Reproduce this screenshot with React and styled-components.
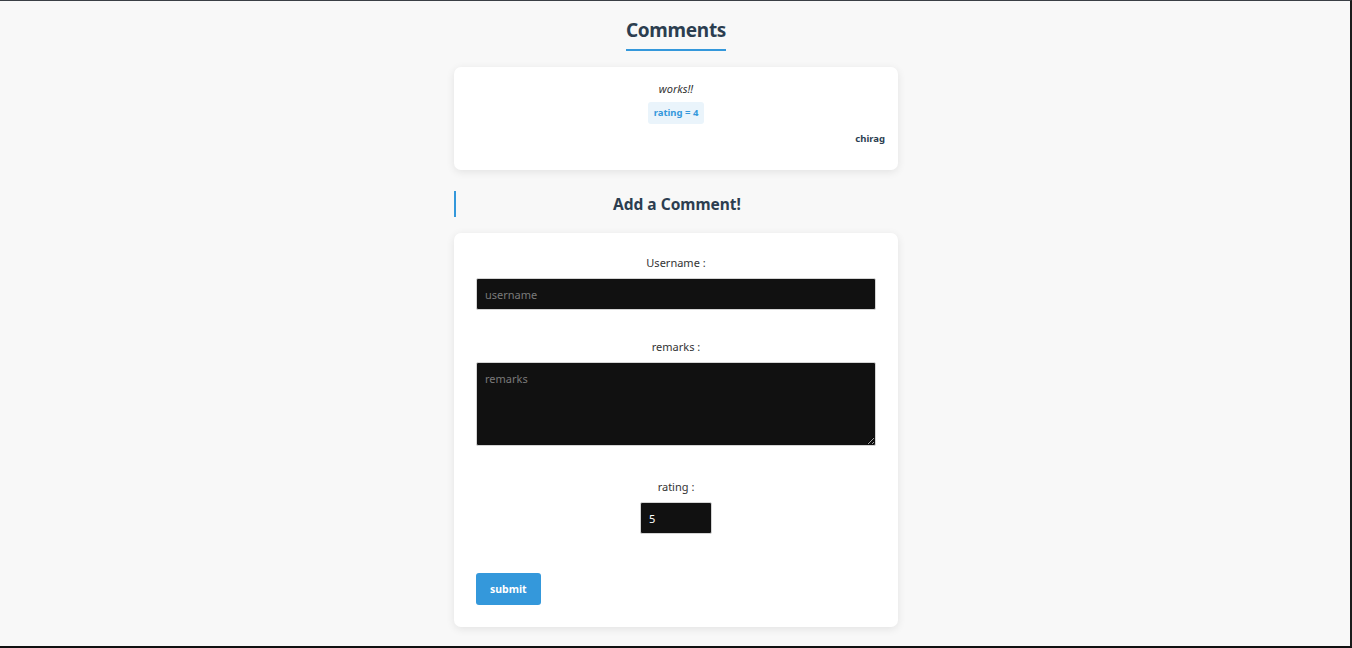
import React from "react";
import styled, { createGlobalStyle } from "styled-components";

const GlobalStyle = createGlobalStyle`
  html, body, #root { height: 100%; }
  body {
    margin: 0;
    background: #f8f8f8;
    font-family: "Noto Sans", "Open Sans", sans-serif;
    color: #333;
  }
  * { box-sizing: border-box; }
`;

const Frame = styled.div`
  min-height: 100vh;
  padding-left: 2px;
  border-top: 1px solid #3a3f45;
  border-right: 2px solid #1b1b1b;
  border-bottom: 2px solid #111;
  background: #f8f8f8;
  overflow: hidden;
`;

const Container = styled.main`
  width: 444px;
  margin: 0 auto;
  display: flex;
  flex-direction: column;
`;

const Header = styled.header`
  display: flex;
  justify-content: center;
  padding-top: 16px;
  margin-bottom: 16px;
`;

const Title = styled.h1`
  margin: 0;
  font-size: 19px;
  letter-spacing: -0.3px;
  line-height: 26px;
  font-weight: 700;
  color: #2c3e50;
  padding-bottom: 6px;
  border-bottom: 2px solid #3498db;
`;

const Card = styled.section`
  background: #fff;
  border-radius: 7px;
  box-shadow: 0 2px 8px rgba(0, 0, 0, 0.09);
  padding: ${(p) => p.$padding};
  display: flex;
  flex-direction: column;
  align-items: center;
`;

const Remark = styled.p`
  margin: 0;
  font-size: 11px;
  line-height: 16px;
  font-style: italic;
  color: #333;
`;

const Badge = styled.span`
  margin-top: 5px;
  padding: 5px 6px;
  font-size: 9.5px;
  line-height: 12px;
  font-weight: 700;
  color: #3498db;
  background: #eaf4fb;
  border-radius: 3px;
`;

const Author = styled.span`
  align-self: flex-end;
  margin-top: 8px;
  font-size: 9.5px;
  line-height: 14px;
  font-weight: 700;
  color: #2c3e50;
`;

const SectionTitle = styled.h2`
  margin: 21px 0 16px;
  height: 26px;
  border-left: 2px solid #3498db;
  font-size: 15.5px;
  line-height: 26px;
  font-weight: 700;
  color: #2c3e50;
  text-align: center;
`;

const Form = styled.form`
  display: flex;
  flex-direction: column;
  align-items: center;
`;

const Field = styled.div`
  display: flex;
  flex-direction: column;
  align-items: center;
  margin-top: ${(p) => p.$top}px;
  width: 100%;
`;

const Label = styled.label`
  font-size: 11px;
  line-height: 16px;
  color: #333;
  margin-bottom: 7px;
`;

const fieldBase = `
  background: #111;
  color: #fff;
  border: 1px solid #d4d4d4;
  border-radius: 2px;
  font-family: "Noto Sans", "Open Sans", sans-serif;
  font-size: 11px;
  padding: 0 8px;
  outline: none;
  &::placeholder { color: #7a7a7a; }
`;

const TextInput = styled.input`
  ${fieldBase}
  width: ${(p) => p.$width}px;
  height: 32px;
  -moz-appearance: textfield;
  &::-webkit-outer-spin-button,
  &::-webkit-inner-spin-button {
    -webkit-appearance: none;
    margin: 0;
  }
`;

const TextArea = styled.textarea`
  ${fieldBase}
  display: block;
  width: 400px;
  height: 84px;
  padding-top: 8px;
  line-height: 16px;
  resize: both;
`;

const SubmitRow = styled.div`
  align-self: stretch;
  margin-top: 39px;
`;

const Button = styled.button`
  height: 32px;
  padding: 0 14px;
  border: none;
  border-radius: 3px;
  background: #3498db;
  color: #fff;
  font-family: "Noto Sans", "Open Sans", sans-serif;
  font-size: 10.5px;
  font-weight: 700;
  cursor: pointer;
`;

export default function App() {
  return (
    <>
      <GlobalStyle />
      <Frame>
        <Container>
          <Header>
            <Title>Comments</Title>
          </Header>
          <Card $padding="14px 13px 24px">
            <Remark>works!!</Remark>
            <Badge>rating = 4</Badge>
            <Author>chirag</Author>
          </Card>
          <SectionTitle>Add a Comment!</SectionTitle>
          <Card $padding="22px 22px 22px">
            <Form onSubmit={(e) => e.preventDefault()}>
              <Field $top={0}>
                <Label htmlFor="username">Username :</Label>
                <TextInput id="username" $width={400} placeholder="username" />
              </Field>
              <Field $top={29}>
                <Label htmlFor="remarks">remarks :</Label>
                <TextArea id="remarks" placeholder="remarks" />
              </Field>
              <Field $top={33}>
                <Label htmlFor="rating">rating :</Label>
                <TextInput id="rating" type="number" $width={72} defaultValue={5} />
              </Field>
              <SubmitRow>
                <Button type="submit">submit</Button>
              </SubmitRow>
            </Form>
          </Card>
        </Container>
      </Frame>
    </>
  );
}
